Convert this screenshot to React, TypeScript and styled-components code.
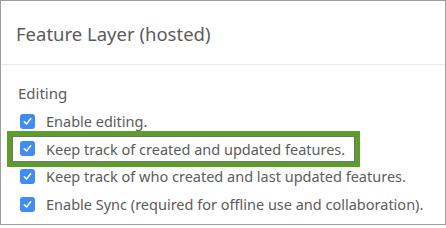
import React from 'react';
import styled, { createGlobalStyle } from 'styled-components';

const GlobalStyle = createGlobalStyle`
    body {
        margin: 0;
        background: #fff;
        font-family: "Noto Sans", "Open Sans", sans-serif;
    }
`

const Panel = styled.div`
    width: 446px;
    height: 225px;
    box-sizing: border-box;
    border: 1px solid #9d9d9d;
    background: #fff;
    overflow: hidden;
`
const Header = styled.div`
    height: 64px;
    display: flex;
    align-items: center;
    padding: 1px 15px 0;
    box-sizing: border-box;
    border-bottom: 1px solid #e9e9e9;
    font-size: 18.5px;
    color: #5c5c5c;
`
const Section = styled.div`
    padding: 17px 0 0 11px;
`
const SectionTitle = styled.div`
    font-size: 15px;
    line-height: 22px;
    color: #5c5c5c;
    padding-left: 6px;
    margin-bottom: 4px;
`
const OptionList = styled.div`
    display: flex;
    flex-direction: column;
    gap: 1.7px;
`
const Option = styled.label<{ $highlight?: boolean }>`
    display: flex;
    align-items: center;
    gap: 11px;
    height: 26px;
    padding: 0 ${p => (p.$highlight ? '10px' : '0')} 0 8px;
    width: ${p => (p.$highlight ? 'fit-content' : 'auto')};
    font-size: 14.5px;
    color: #5c5c5c;
    white-space: nowrap;
    ${p => p.$highlight && `
        outline: 5px solid #5c9d2b;
        box-shadow: inset 0 0 0 1px #727272;
    `}
`
const Box = styled.span`
    width: 15px;
    height: 15px;
    flex: none;
    border-radius: 3px;
    background: #3f8cf3;
    display: flex;
    align-items: center;
    justify-content: center;
`

const Check = () => (
  <Box>
    <svg width="11" height="11" viewBox="0 0 11 11">
      <path d="M2.3 5.8 L4.5 8 L8.7 2.8" fill="none" stroke="#fff" strokeWidth="1.6" strokeLinecap="round" strokeLinejoin="round" />
    </svg>
  </Box>
)

const options = [
  { text: 'Enable editing.' },
  { text: 'Keep track of created and updated features.', highlight: true },
  { text: 'Keep track of who created and last updated features.' },
  { text: 'Enable Sync (required for offline use and collaboration).' },
]

const App = () => {
  return (
    <>
      <GlobalStyle />
      <Panel>
        <Header>Feature Layer (hosted)</Header>
        <Section>
          <SectionTitle>Editing</SectionTitle>
          <OptionList>
            {options.map(o => (
              <Option key={o.text} $highlight={o.highlight}>
                <Check />
                {o.text}
              </Option>
            ))}
          </OptionList>
        </Section>
      </Panel>
    </>
  )
}

export default App
